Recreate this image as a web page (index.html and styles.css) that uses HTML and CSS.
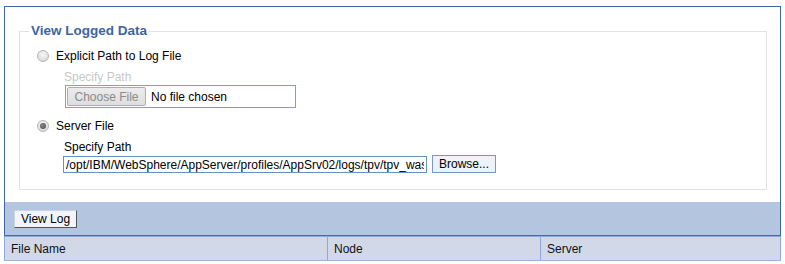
FILE: index.html
```html
<!DOCTYPE html>
<html lang="en">
<head>
    <meta charset="UTF-8">
    <title>View Logged Data</title>
    <link rel="stylesheet" href="styles.css">
</head>
<body>

    <div class="panel">
        <div class="panel-body">
            <fieldset class="log-source">
                <legend>View Logged Data</legend>

                <label class="choice">
                    <input type="radio" name="source" class="radio">
                    <span>Explicit Path to Log File</span>
                </label>
                <div class="path-group">
                    <div class="path-label disabled">Specify Path</div>
                    <div class="file-box">
                        <button class="file-btn" disabled>Choose File</button>
                        <span class="file-name">No file chosen</span>
                    </div>
                </div>

                <label class="choice">
                    <input type="radio" name="source" class="radio" checked>
                    <span>Server File</span>
                </label>
                <div class="path-group">
                    <div class="path-label">Specify Path</div>
                    <div class="path-row">
                        <input type="text" class="path-input" value="/opt/IBM/WebSphere/AppServer/profiles/AppSrv02/logs/tpv/tpv_was">
                        <button class="browse-btn">Browse...</button>
                    </div>
                </div>
            </fieldset>
        </div>
        <div class="button-bar">
            <button class="view-btn">View Log</button>
        </div>
    </div>

    <table class="log-table">
        <thead>
            <tr>
                <th class="col-file">File Name</th>
                <th class="col-node">Node</th>
                <th class="col-server">Server</th>
            </tr>
        </thead>
    </table>

</body>
</html>
```

FILE: styles.css
```css
* {
    box-sizing: border-box;
}

body {
    margin: 0;
    padding: 6px 4px 0 4px;
    font-family: 'Liberation Sans', Arial, sans-serif;
    font-size: 12px;
    color: #000;
    background: #fff;
}

.panel {
    width: 777px;
    border: 1px solid #3f65a4;
    border-bottom-color: #4a6ba6;
}

.panel-body {
    padding: 16px 13px 12px 14px;
}

/* Fieldset with the two sources */
.log-source {
    margin: 0;
    padding: 8px 12px 16px 17px;
    border: 1px solid #e2e2e2;
    min-width: 0;
}

.log-source legend {
    padding: 0 2px;
    margin-left: -8px;
    font-weight: bold;
    font-size: 13.5px;
    line-height: 16px;
    color: #3d64a3;
}

.choice {
    display: flex;
    align-items: center;
    height: 18px;
}

.radio {
    appearance: none;
    -webkit-appearance: none;
    width: 12px;
    height: 12px;
    margin: 0 7px 0 0;
    border: 1px solid #b5b5b5;
    border-radius: 50%;
    background: radial-gradient(circle at 50% 35%, #f6f6f6, #d4d4d4);
    position: relative;
}

.radio:checked::after {
    content: '';
    position: absolute;
    left: 2px;
    top: 2px;
    width: 6px;
    height: 6px;
    border-radius: 50%;
    background: radial-gradient(circle at 40% 40%, #888, #444);
}

.path-group {
    padding-left: 27px;
    margin-bottom: 9px;
}

.path-group:last-child {
    margin-bottom: 0;
}

.path-label {
    margin-top: 5px;
    line-height: 15px;
}

.path-label.disabled {
    color: #c8c8c8;
}

.file-box {
    display: flex;
    align-items: center;
    width: 231px;
    height: 23px;
    margin-left: 1px;
    border: 1px solid #7f9fcc;
    padding: 1px;
}

.file-btn {
    width: 79px;
    height: 19px;
    padding: 0;
    font-family: inherit;
    font-size: 12px;
    color: #8a8a8a;
    background: linear-gradient(#ececec, #dedede);
    border: 1px solid #adadad;
    border-radius: 2px;
}

.file-name {
    margin-left: 5px;
}

.path-row {
    display: flex;
    align-items: center;
    height: 18px;
    margin-left: -1px;
}

.path-input {
    width: 364px;
    height: 17px;
    margin-top: 1px;
    padding: 0 2px;
    font-family: inherit;
    font-size: 12px;
    color: #000;
    border: 1px solid #6a8fc4;
    outline: none;
}

.browse-btn {
    width: 64px;
    height: 18px;
    margin-left: 5px;
    padding: 0;
    font-family: inherit;
    font-size: 12px;
    color: #000;
    background: #eef2fa;
    border: 1px solid #7896c8;
}

/* Blue bar with the action button */
.button-bar {
    height: 33px;
    padding: 8px 9px 0 9px;
    background: #b4c5df;
}

.view-btn {
    width: 63px;
    height: 18px;
    padding: 0;
    font-family: inherit;
    font-size: 12px;
    color: #000;
    background: #f2f5fb;
    border: 1px solid #555;
    border-top-color: #c9d3e6;
    border-left-color: #c9d3e6;
}

/* Result table header */
.log-table {
    width: 777px;
    border-collapse: collapse;
}

.log-table th {
    height: 24px;
    padding: 0 6px;
    text-align: left;
    font-weight: normal;
    font-size: 12px;
    color: #111;
    background: #d1d9e8;
    border: 1px solid #8ea8d8;
    border-bottom-color: #9fb5dd;
}

.col-file {
    width: 323px;
}

.col-node {
    width: 213px;
}
```
